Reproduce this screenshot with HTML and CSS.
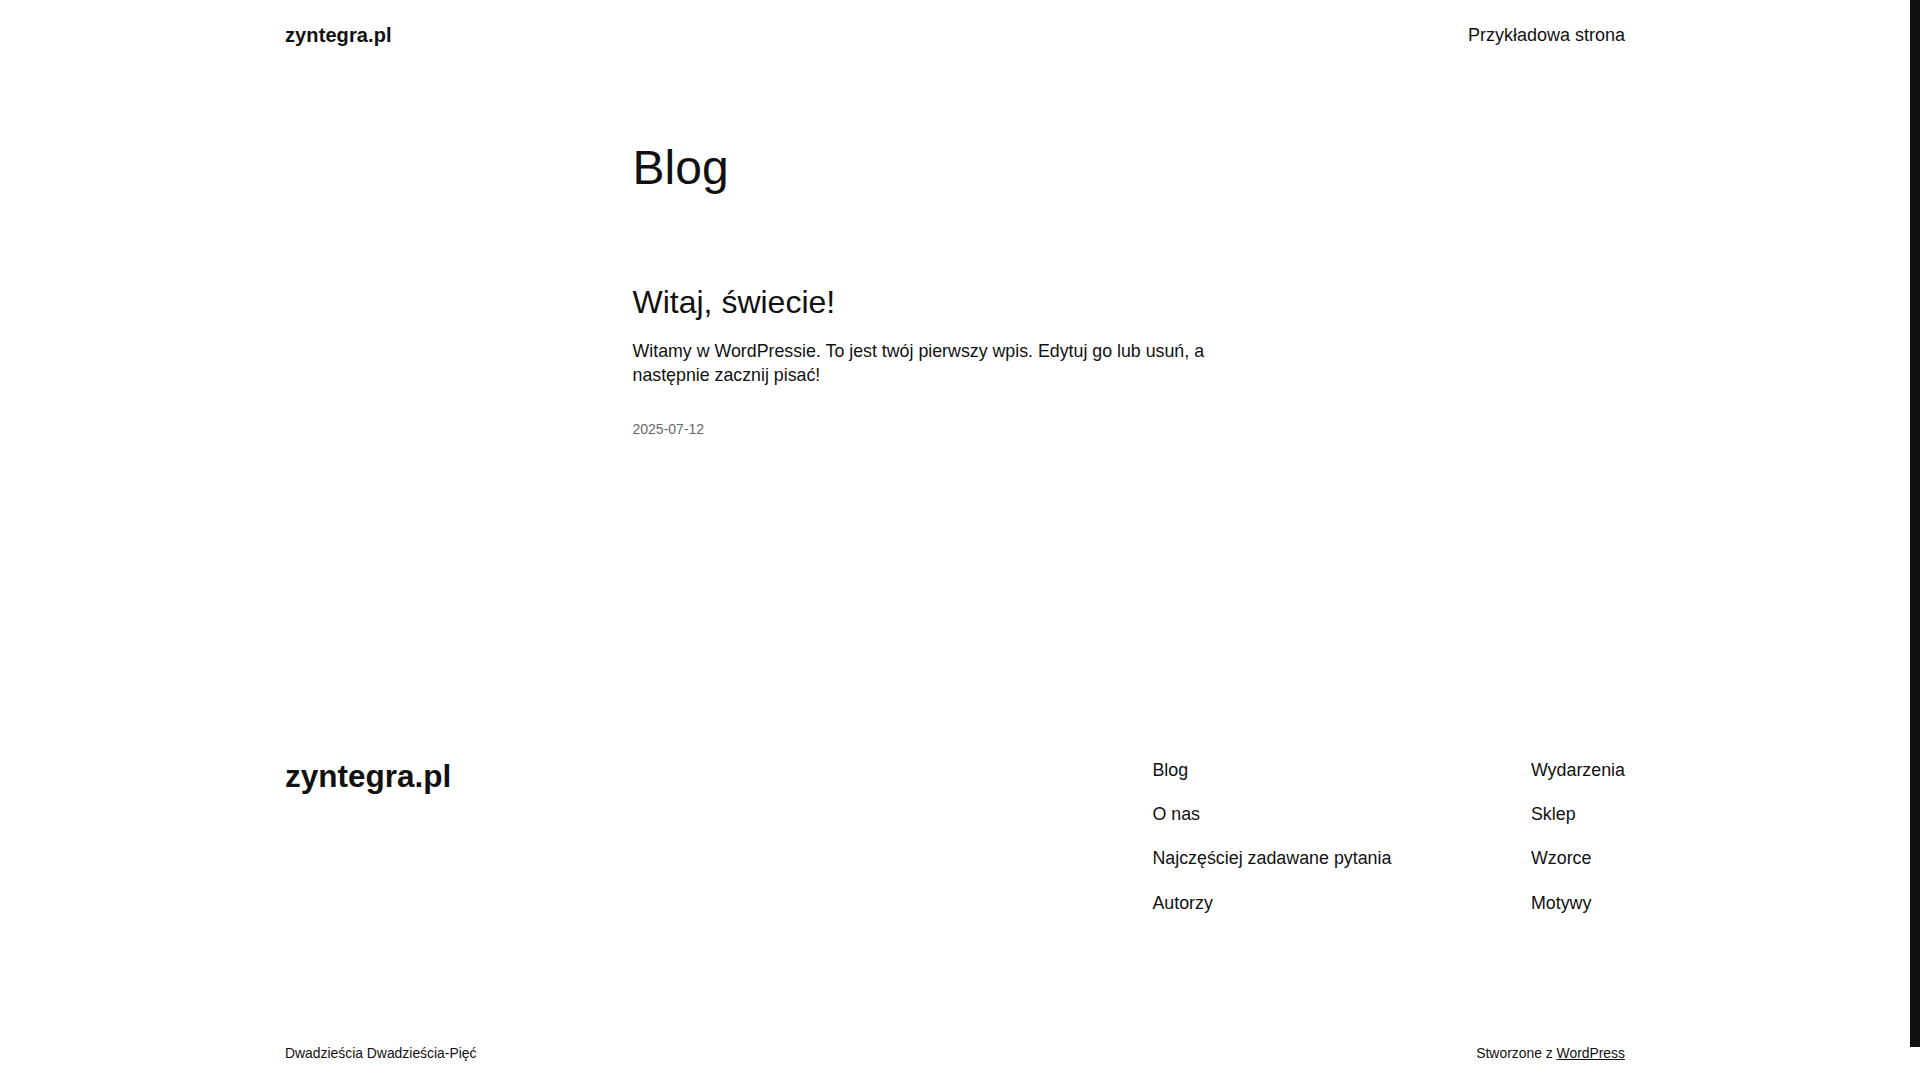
FILE: index.html
```html
<!DOCTYPE html>
<html lang="pl">
<head>
<meta charset="utf-8">
<title>zyntegra.pl</title>
<link rel="stylesheet" href="styles.css">
</head>
<body>
<div class="page">
<header class="site-header">
  <a class="site-title" href="#">zyntegra.pl</a>
  <nav class="header-nav"><a href="#">Przykładowa strona</a></nav>
</header>
<main class="main">
  <h1 class="page-title">Blog</h1>
  <article class="post">
    <h2 class="post-title">Witaj, świecie!</h2>
    <p class="post-excerpt">Witamy w WordPressie. To jest twój pierwszy wpis. Edytuj go lub usuń, a następnie zacznij pisać!</p>
    <div class="post-date">2025-07-12</div>
  </article>
</main>
<footer class="site-footer">
  <div class="footer-top">
    <a class="footer-title" href="#">zyntegra.pl</a>
    <div class="footer-navs">
      <ul class="footer-nav">
        <li><a href="#">Blog</a></li>
        <li><a href="#">O nas</a></li>
        <li><a href="#">Najczęściej zadawane pytania</a></li>
        <li><a href="#">Autorzy</a></li>
      </ul>
      <ul class="footer-nav">
        <li><a href="#">Wydarzenia</a></li>
        <li><a href="#">Sklep</a></li>
        <li><a href="#">Wzorce</a></li>
        <li><a href="#">Motywy</a></li>
      </ul>
    </div>
  </div>
  <div class="footer-bottom">
    <span>Dwadzieścia Dwadzieścia-Pięć</span>
    <span>Stworzone z <a class="wp-link" href="#">WordPress</a></span>
  </div>
</footer>
</div>
<div class="scroll-thumb" aria-hidden="true"></div>
</body>
</html>
```

FILE: styles.css
```css
body {
  margin: 0;
  font-family: "Liberation Sans", Arial, sans-serif;
  color: #111111;
  background: #ffffff;
}

.page {
  padding-right: 10px;
}

.scroll-thumb {
  position: fixed;
  top: 0;
  right: 0;
  width: 10px;
  height: 1047px;
  background: #111111;
}

a {
  color: inherit;
  text-decoration: none;
}

.site-header {
  max-width: 1340px;
  margin: 0 auto;
  padding: 21px 0;
  display: flex;
  justify-content: space-between;
  align-items: center;
}

.site-title {
  font-size: 20px;
  line-height: 28px;
  font-weight: 700;
  letter-spacing: 0.1px;
}

.header-nav {
  font-size: 18px;
  line-height: 28px;
}

.main {
  width: 645px;
  margin: 0 auto;
}

.page-title {
  margin: 69px 0 0;
  font-size: 48px;
  line-height: 1.2;
  font-weight: 400;
}

.post-title {
  margin: 86px 0 0;
  font-size: 32px;
  line-height: 1.2;
  font-weight: 400;
}

.post-excerpt {
  margin: 18px 0 0;
  font-size: 17.8px;
  line-height: 24.5px;
}

.post-date {
  margin-top: 32.5px;
  font-size: 14px;
  line-height: 1.4;
  color: #686868;
}

.site-footer {
  max-width: 1340px;
  margin: 318px auto 0;
  padding-bottom: 52px;
}

.footer-top {
  display: flex;
  justify-content: space-between;
  align-items: flex-start;
}

.footer-title {
  font-size: 31.5px;
  line-height: 37.2px;
  font-weight: 700;
}

.footer-navs {
  display: flex;
  gap: 139.5px;
}

.footer-nav {
  list-style: none;
  margin: 0;
  padding: 0;
  display: flex;
  flex-direction: column;
  gap: 19px;
  font-size: 17.85px;
  line-height: 25.2px;
}

.footer-bottom {
  margin-top: 128px;
  display: flex;
  justify-content: space-between;
  font-size: 13.9px;
  line-height: 19.6px;
}

.wp-link {
  text-decoration: underline;
}
```
